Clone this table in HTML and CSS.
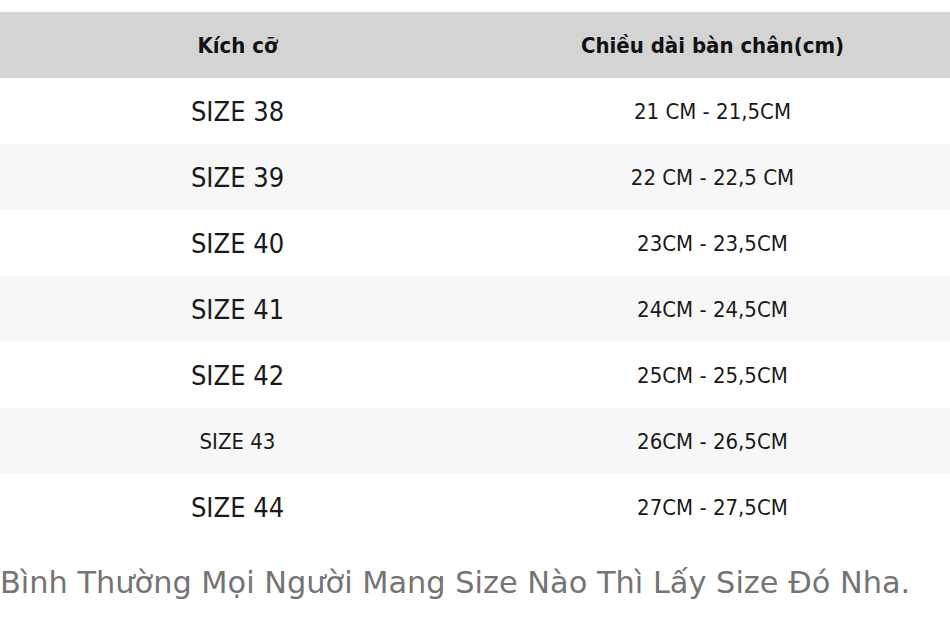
FILE: index.html
```html
<!DOCTYPE html>
<html lang="vi">
<head>
<meta charset="utf-8">
<title>Bảng size</title>
<link rel="stylesheet" href="styles.css">
</head>
<body>
<div class="page">
  <table class="size-table">
    <thead>
      <tr><th>Kích cỡ</th><th>Chiều dài bàn chân(cm)</th></tr>
    </thead>
    <tbody>
      <tr><td class="size">SIZE 38</td><td class="len">21 CM - 21,5CM</td></tr>
      <tr><td class="size">SIZE 39</td><td class="len">22 CM - 22,5 CM</td></tr>
      <tr><td class="size">SIZE 40</td><td class="len">23CM - 23,5CM</td></tr>
      <tr><td class="size">SIZE 41</td><td class="len">24CM - 24,5CM</td></tr>
      <tr><td class="size">SIZE 42</td><td class="len">25CM - 25,5CM</td></tr>
      <tr><td class="size small">SIZE 43</td><td class="len">26CM - 26,5CM</td></tr>
      <tr><td class="size">SIZE 44</td><td class="len">27CM - 27,5CM</td></tr>
    </tbody>
  </table>
  <p class="note">Bình Thường Mọi Người Mang Size Nào Thì Lấy Size Đó Nha.</p>
</div>
</body>
</html>
```
FILE: styles.css
```css
html, body {
  margin: 0;
  padding: 0;
  background: #ffffff;
}
.page {
  width: 950px;
  padding-top: 12px;
  font-family: "DejaVu Sans", sans-serif;
  color: #1a1a1a;
}
.size-table {
  width: 950px;
  border-collapse: collapse;
  table-layout: fixed;
  font-family: "DejaVu Sans Condensed", "DejaVu Sans", sans-serif;
  font-stretch: condensed;
}
.size-table th,
.size-table td {
  height: 66px;
  padding: 0;
  text-align: center;
  vertical-align: middle;
}
.size-table thead tr {
  background: #d4d4d4;
}
.size-table th {
  font-size: 22px;
  font-weight: bold;
  color: #111111;
}
.size-table tbody tr:nth-child(even) {
  background: #f7f7f7;
}
.size {
  font-size: 27px;
}
.size.small {
  font-size: 22px;
}
.len {
  font-size: 22px;
}
.note {
  margin: 25px 0 0 0;
  font-size: 30.4px;
  color: #747474;
  white-space: nowrap;
}
```
